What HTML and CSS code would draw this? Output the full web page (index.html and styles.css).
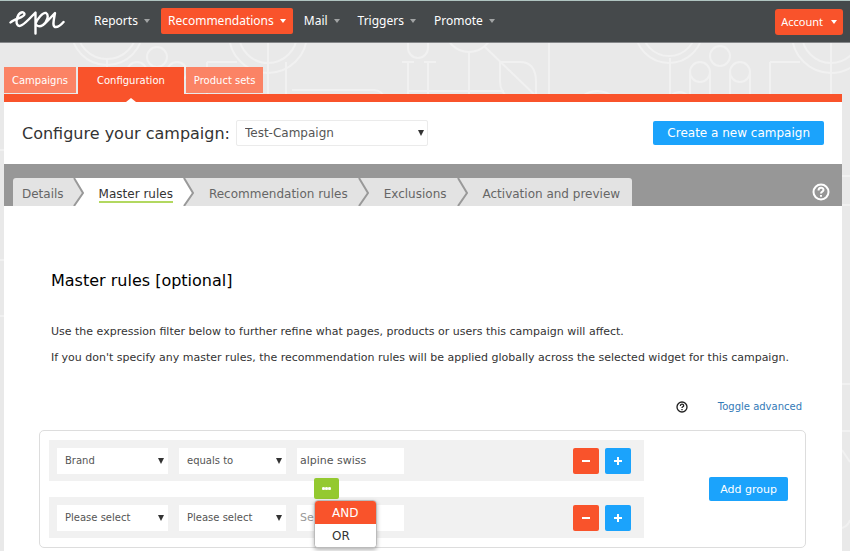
FILE: index.html
```html
<!DOCTYPE html>
<html lang="en">
<head>
  <meta charset="UTF-8">
  <meta name="viewport" content="width=device-width, initial-scale=1.0">
  <title>Master rules</title>
  <link rel="stylesheet" href="styles.css">
</head>
<body>
  <svg class="pattern" width="850" height="551" viewBox="0 0 850 551" aria-hidden="true">
    <g fill="none" stroke="#f1f1f1" stroke-width="2">
      <circle cx="107" cy="29" r="30"/><circle cx="107" cy="29" r="36"/><path d="M107 59v40"/>
      <circle cx="157" cy="57" r="10"/><circle cx="137" cy="72" r="10"/><circle cx="177" cy="72" r="10"/>
      <path d="M127 72v30M147 72v30M167 72v30M187 72v30M207 62h30M207 62v40M268 42v60"/>
      <circle cx="268" cy="34" r="29"/><circle cx="268" cy="34" r="39"/>
      <path d="M286 62v38M292 90h82q8 0 12 10M408 42v6a10 10 0 0 0 20 0v-6M402 62h12M424 62h12M408 62v40M428 62v40M408 91h96M469 52v50M549 42v60"/>
      <circle cx="469" cy="28" r="24"/>
      <path d="M484 46l56 54M500 62h20q16 0 16 20v20M500 62v20q0 12 14 20"/>
      <circle cx="669" cy="29" r="27"/><circle cx="669" cy="29" r="34"/><path d="M670 58v40"/>
      <circle cx="720" cy="56" r="10"/><circle cx="700" cy="72" r="10"/><circle cx="740" cy="72" r="10"/>
      <path d="M690 72v30M710 72v30M730 72v30M750 72v30M770 62h30M770 62v40M831 42v60"/>
      <circle cx="831" cy="34" r="29"/><circle cx="831" cy="34" r="39"/>
      <path d="M580 98q16-14 36 0M668 98q12-12 22 0M842 176h8M842 205h8M842 384h8M842 431h8M842 450l8 12M842 528q6-2 8-8M0 150h4M0 260h4M0 316h4"/>
    </g>
  </svg>

  <header class="topbar">
    <a class="logo" href="#" aria-label="epi">
      <svg width="56" height="26" viewBox="0 0 56 26">
        <path d="M1.500 13.500C6 9 15.500 9 15.500 5C15 2 10 3 8.500 8C6 15 9 18.500 13 16C17 14 22 8 26.500 3.500V24.500M26.500 15C28 10 34 3 37 4C40.500 6 38 13 34 16C31 18 28.500 17 27.500 16M34 16C38 13 42 8 46 4C45 10 43 17 46 18C49 18.500 52 16 54.500 13" fill="none" stroke="#fff" stroke-width="2.400" stroke-linecap="round" stroke-linejoin="round"/>
      </svg>
    </a>
    <nav class="menu">
      <a href="#">Reports</a>
      <a href="#" class="active">Recommendations</a>
      <a href="#">Mail</a>
      <a href="#">Triggers</a>
      <a href="#">Promote</a>
    </nav>
    <button type="button" class="account">Account</button>
  </header>

  <main class="page">
    <nav class="tabs">
      <a href="#">Campaigns</a>
      <a href="#" class="current">Configuration</a>
      <a href="#">Product sets</a>
    </nav>

    <section class="campaign">
      <label for="campaign">Configure your campaign:</label>
      <div class="select select-campaign">
        <select id="campaign"><option>Test-Campaign</option></select>
      </div>
      <button type="button" class="btn btn-create">Create a new campaign</button>
    </section>

    <nav class="steps">
      <div class="step-list">
        <a href="#">Details</a>
        <svg class="chevron to-white" width="12" height="28" viewBox="0 0 12 28"><path class="left" d="M0 0L10 15L1 28H0z"/><path class="line" d="M1 0L10 15L1 28"/></svg>
        <a href="#" class="current"><span>Master rules</span></a>
        <svg class="chevron from-white" width="12" height="28" viewBox="0 0 12 28"><path class="left" d="M0 0L10 15L1 28H0z"/><path class="line" d="M1 0L10 15L1 28"/></svg>
        <a href="#">Recommendation rules</a>
        <svg class="chevron" width="12" height="28" viewBox="0 0 12 28"><path class="left" d="M0 0L10 15L1 28H0z"/><path class="line" d="M1 0L10 15L1 28"/></svg>
        <a href="#">Exclusions</a>
        <svg class="chevron" width="12" height="28" viewBox="0 0 12 28"><path class="left" d="M0 0L10 15L1 28H0z"/><path class="line" d="M1 0L10 15L1 28"/></svg>
        <a href="#">Activation and preview</a>
      </div>
      <button type="button" class="help help-light" aria-label="Help">
        <svg width="18" height="18" viewBox="0 0 18 18"><circle cx="9" cy="9" r="7.500"/><path d="M6.500 7.500C6.500 4 11.500 4 11.500 7C11.500 8.800 9 8.500 9 10.500M9 12V13.800"/></svg>
      </button>
    </nav>

    <section class="content">
      <h1>Master rules [optional]</h1>
      <p>Use the expression filter below to further refine what pages, products or users this campaign will affect.</p>
      <p>If you don't specify any master rules, the recommendation rules will be applied globally across the selected widget for this campaign.</p>
      <div class="tools">
        <button type="button" class="help" aria-label="Help">
          <svg width="12" height="12" viewBox="0 0 18 18"><circle cx="9" cy="9" r="7.500"/><path d="M6.500 7.500C6.500 4 11.500 4 11.500 7C11.500 8.800 9 8.500 9 10.500M9 12V13.800"/></svg>
        </button>
        <a href="#">Toggle advanced</a>
      </div>
    </section>

    <section class="group">
      <div class="rules">
        <div class="rule">
          <div class="select"><select aria-label="Attribute"><option>Brand</option></select></div>
          <div class="select"><select aria-label="Operator"><option>equals to</option></select></div>
          <input type="text" aria-label="Value" value="alpine swiss">
          <div class="rule-buttons">
            <button type="button" class="square remove" aria-label="Remove rule"><svg width="8" height="8" viewBox="0 0 8 8"><path d="M0 4H8"/></svg></button>
            <button type="button" class="square add" aria-label="Add rule"><svg width="8" height="8" viewBox="0 0 8 8"><path d="M0 4H8M4 0V8"/></svg></button>
          </div>
        </div>
        <div class="rule">
          <div class="select"><select aria-label="Attribute"><option>Please select</option></select></div>
          <div class="select"><select aria-label="Operator"><option>Please select</option></select></div>
          <input type="text" aria-label="Value" placeholder="Select value">
          <div class="rule-buttons">
            <button type="button" class="square remove" aria-label="Remove rule"><svg width="8" height="8" viewBox="0 0 8 8"><path d="M0 4H8"/></svg></button>
            <button type="button" class="square add" aria-label="Add rule"><svg width="8" height="8" viewBox="0 0 8 8"><path d="M0 4H8M4 0V8"/></svg></button>
          </div>
        </div>
        <div class="joiner">
          <button type="button" class="joiner-toggle" aria-label="Choose operator"><svg width="9" height="3" viewBox="0 0 9 3"><rect width="9" height="3"/><circle cx="1.500" cy="1.500" r="1.500"/><circle cx="4.500" cy="1.500" r="1.500"/><circle cx="7.500" cy="1.500" r="1.500"/></svg></button>
          <div class="joiner-menu">
            <button type="button" class="selected">AND</button>
            <button type="button">OR</button>
          </div>
        </div>
      </div>
      <div class="group-actions">
        <button type="button" class="btn">Add group</button>
      </div>
    </section>
  </main>
</body>
</html>
```

FILE: styles.css
```css
* {
  box-sizing: border-box;
}
body {
  margin: 0;
  min-height: 100vh;
  display: flex;
  flex-direction: column;
  background-color: #e9e9e9;
  color: #333;
  font-family: Verdana, "DejaVu Sans", sans-serif;
  font-size: 11px;
}
a {
  text-decoration: none;
}
button,
input,
select {
  font-family: inherit;
}
button {
  border: none;
  padding: 0;
  cursor: pointer;
}
.pattern {
  position: absolute;
  top: 0;
  left: 0;
  z-index: -1;
}

/* top bar */
.topbar {
  display: flex;
  align-items: center;
  height: 43px;
  padding: 0 7px 0 9px;
  background-color: #45494b;
  border-top: 1px solid #afc4c0;
  border-bottom: 1px solid #85878a;
}
.logo {
  display: flex;
  width: 78px;
}
.menu {
  display: flex;
  flex: 1;
  gap: 4px;
}
.menu a {
  display: flex;
  align-items: center;
  height: 26px;
  margin-bottom: 2px;
  padding: 0 7px;
  color: #fff;
  font-family: "Noto Sans", sans-serif;
  font-size: 12px;
}
.menu a::after,
.account::after {
  content: "";
  margin-left: 6px;
  border: 3px solid transparent;
  border-top: 4px solid #a2a4a5;
  border-bottom: none;
}
.menu .active {
  background-color: #f9532b;
  border-radius: 2px;
}
.menu .active::after,
.account::after {
  border-top-color: #fff;
}
.account {
  display: flex;
  align-items: center;
  height: 26px;
  padding: 0 6px;
  background-color: #f9532b;
  border-radius: 3px;
  color: #fff;
  font-family: "Noto Sans", sans-serif;
  font-size: 11px;
}
.account::after {
  margin-left: 8px;
}

/* page */
.page {
  flex: 1;
  margin: 24px 8px 0 4px;
  padding-bottom: 4px;
  background: linear-gradient(#fff, #fff) 0 40px no-repeat;
}
.tabs {
  display: flex;
  align-items: flex-start;
  gap: 2px;
  border-bottom: 8px solid #f9532b;
}
.tabs a {
  height: 26px;
  margin-bottom: 1px;
  padding: 0 8px;
  background-color: #fb8365;
  color: #fff;
  font-size: 10px;
  line-height: 27px;
}
.tabs .current {
  display: flex;
  flex-direction: column;
  align-items: center;
  height: 35px;
  margin-bottom: -8px;
  padding: 0 19px;
  background-color: #f9532b;
}
.tabs .current::after {
  content: "";
  margin-top: 4px;
  border: 5px solid transparent;
  border-top: none;
  border-bottom: 4px solid #fff;
}
.campaign {
  display: flex;
  align-items: center;
  height: 62px;
  padding: 0 18px;
  background-color: #fff;
}
.campaign label {
  font-size: 16px;
  white-space: nowrap;
}
.select {
  display: grid;
  align-items: center;
  width: 111px;
}
.select select,
.select::after {
  grid-area: 1 / 1;
}
.select::after {
  content: "";
  justify-self: end;
  margin-right: 4px;
  border: 3px solid transparent;
  border-top: 6px solid #333;
  border-bottom: none;
  pointer-events: none;
}
.select select {
  appearance: none;
  width: 100%;
  height: 26px;
  padding: 0 8px;
  border: none;
  background-color: #fff;
  color: #555;
  font-size: 10px;
}
.select-campaign {
  width: 192px;
  margin: 0 auto 0 6px;
}
.select-campaign select {
  border: 1px solid #ebebeb;
  border-radius: 2px;
  font-size: 12px;
}
.btn {
  height: 24px;
  padding: 0 11px;
  background-color: #1ba3fc;
  border-radius: 2px;
  color: #fff;
  font-size: 11px;
}
.btn-create {
  padding: 0 14px;
  font-size: 12px;
}

/* steps */
.steps {
  display: flex;
  justify-content: space-between;
  align-items: flex-end;
  height: 42px;
  padding: 0 12px 0 9px;
  background-color: #979797;
}
.step-list {
  display: flex;
  background-color: #e3e3e3;
  border-radius: 3px 3px 0 0;
  overflow: hidden;
}
.step-list a {
  height: 28px;
  padding: 0 10px 0 14px;
  color: #666;
  font-size: 12px;
  line-height: 32px;
  white-space: nowrap;
}
.step-list a:first-child {
  padding: 0 9px;
}
.step-list a:last-child {
  padding-right: 12px;
}
.step-list .current {
  background-color: #fff;
  color: #333;
}
.step-list .current span {
  border-bottom: 2px solid #b2d860;
}
.chevron .left {
  fill: #e3e3e3;
}
.chevron .line {
  fill: none;
  stroke: #999;
  stroke-width: 2;
}
.chevron.to-white {
  background-color: #fff;
}
.chevron.from-white .left {
  fill: #fff;
}
.help {
  display: flex;
  background: none;
}
.help path,
.help circle {
  fill: none;
  stroke: #222;
  stroke-width: 2;
}
.help-light {
  margin-bottom: 5px;
}
.help-light path,
.help-light circle {
  stroke: #fff;
}

/* content */
.content {
  padding: 65px 40px 15px 47px;
  background-color: #fff;
}
.content h1 {
  margin: 0 0 33px;
  color: #000;
  font-size: 16px;
  font-weight: normal;
  line-height: 20px;
}
.content p {
  margin: 0 0 10px;
  line-height: 16px;
}
.tools {
  display: flex;
  justify-content: flex-end;
  align-items: center;
  gap: 30px;
  margin-top: 33px;
}
.tools a {
  color: #337ab7;
  font-size: 10px;
  line-height: 16px;
}

/* rule group */
.group {
  display: flex;
  margin: 0 36px 0 35px;
  padding: 9px;
  background-color: #fff;
  border: 1px solid #ddd;
  border-radius: 5px;
}
.rules {
  position: relative;
  display: flex;
  flex-direction: column;
  flex: 1;
  gap: 16px;
}
.rule {
  display: flex;
  align-items: center;
  gap: 11px;
  height: 41px;
  padding: 0 13px 0 8px;
  background-color: #f1f1f1;
}
.rule .select + .select {
  width: 107px;
}
.rule input {
  width: 107px;
  height: 26px;
  padding: 0 3px;
  border: none;
  background-color: #fff;
  color: #555;
  font-size: 11px;
}
.rule input::placeholder {
  color: #999;
}
.rule-buttons {
  display: flex;
  gap: 6px;
  margin-left: auto;
}
.square {
  display: flex;
  align-items: center;
  justify-content: center;
  width: 26px;
  height: 26px;
  border-radius: 2px;
}
.square path {
  stroke: #fff;
  stroke-width: 2;
}
.remove {
  background-color: #f9532b;
}
.add {
  background-color: #1ba3fc;
}
.joiner {
  position: absolute;
  top: 38px;
  left: 265px;
}
.joiner-toggle {
  display: flex;
  align-items: center;
  justify-content: center;
  width: 25px;
  height: 21px;
  background-color: #94c930;
  border-radius: 2px;
}
.joiner-toggle rect {
  fill: #b9dc78;
}
.joiner-toggle circle {
  fill: #fff;
}
.joiner-menu {
  display: flex;
  flex-direction: column;
  width: 63px;
  margin-top: 1px;
  background-color: #fff;
  border: 1px solid #bbb;
  border-radius: 4px;
  box-shadow: 0 2px 4px rgba(0, 0, 0, 0.3);
  overflow: hidden;
}
.joiner-menu button {
  height: 23px;
  padding-left: 17px;
  background-color: #fff;
  color: #333;
  font-size: 12px;
  text-align: left;
}
.joiner-menu .selected {
  background-color: #f9532b;
  color: #fff;
}
.group-actions {
  display: flex;
  align-items: center;
  padding: 0 8px 0 65px;
}
```
